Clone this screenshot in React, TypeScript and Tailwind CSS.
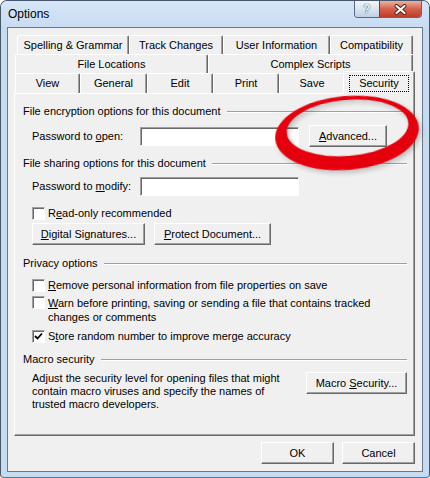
import React from "react";

// classic 3D edge colours
const raised =
  "border border-t-white border-l-white border-r-[#696969] border-b-[#696969] shadow-[inset_-1px_-1px_0_#a0a0a0] bg-[#f0f0f0]";
const sunken =
  "border border-t-[#a0a0a0] border-l-[#a0a0a0] border-r-white border-b-white shadow-[inset_1px_1px_0_#696969] bg-white";

const Tab = ({ label, className = "" }: { label: string; className?: string }) => (
  <div
    className={`flex h-full items-center justify-center rounded-t-[2px] border-l border-t border-r border-l-white border-t-white border-r-[#696969] shadow-[inset_-1px_0_0_#a0a0a0] ${className}`}
  >
    {label}
  </div>
);

const GroupHeader = ({ title, className = "" }: { title: string; className?: string }) => (
  <div className={`flex h-[13px] items-center pl-[8px] pr-[7px] ${className}`}>
    <span className="leading-[13px]">{title}</span>
    <div className="ml-[6px] h-[2px] flex-1 border-t border-b border-t-[#a0a0a0] border-b-white" />
  </div>
);

// label wrapped in a span so flex doesn't trim the spaces around the access key
const Button = ({ children, className = "" }: { children: React.ReactNode; className?: string }) => (
  <div className={`flex h-[22px] items-center justify-center ${raised} ${className}`}>
    <span>{children}</span>
  </div>
);

const CheckBox = ({ checked, children, className = "" }: { checked?: boolean; children: React.ReactNode; className?: string }) => (
  <div className={`flex items-start pl-[17px] ${className}`}>
    <div className={`flex h-[13px] w-[13px] shrink-0 items-center justify-center ${sunken}`}>
      {checked && (
        <svg width="9" height="9" viewBox="0 0 9 9">
          <path d="M1 4 L3.5 6.5 L8 1.5" fill="none" stroke="#000" strokeWidth="1.8" />
        </svg>
      )}
    </div>
    <div className="ml-[3px]">{children}</div>
  </div>
);

const Key = ({ children }: { children: React.ReactNode }) => <span className="underline">{children}</span>;

const ring =
  "M 275 133 a 72 37 0 1 0 144 0 a 72 37 0 1 0 -144 0 Z M 287 128 a 61 28 0 1 0 122 0 a 61 28 0 1 0 -122 0 Z";

export default function App() {
  return (
    <div className="relative flex h-[478px] w-[430px] flex-col overflow-hidden rounded-t-[7px] rounded-b-[4px] border border-[#46576b] border-b-[#2f82c8] bg-[#c6daf0] font-['Liberation_Sans',Arial,sans-serif] text-[11px] leading-[13px] text-black">
      {/* title bar */}
      <div className="flex h-[26px] shrink-0 justify-between bg-linear-to-b from-[#d6e6f8] to-[#c9dcf2] pl-[7px] pr-[7px]">
        <div className="flex items-center text-[12px]">Options</div>
        <div className="flex h-[17px] self-start overflow-hidden rounded-b-[4px] border border-t-0 border-[#586a80]">
          <div className="flex w-[24px] items-center justify-center bg-linear-to-b from-[#f0f5fa] via-[#dbe5f1] to-[#bfd0e4] text-[12px] font-bold text-[#f7f9fc] [text-shadow:0_0_1px_#3a4b60,0_0_1px_#3a4b60]">
            ?
          </div>
          <div className="flex w-[42px] items-center justify-center border-l border-[#7a3a30] bg-linear-to-b from-[#eab1a4] via-[#d3604b] to-[#c03a26]">
            <svg width="13" height="11" viewBox="0 0 13 11">
              <path d="M2.5 2 L10.5 9 M10.5 2 L2.5 9" stroke="#5a1c14" strokeWidth="4" strokeLinecap="round" />
              <path d="M2.5 2 L10.5 9 M10.5 2 L2.5 9" stroke="#fff" strokeWidth="2.2" strokeLinecap="round" />
            </svg>
          </div>
        </div>
      </div>

      {/* client area */}
      <div className="mx-[6px] flex h-[445px] shrink-0 flex-col border border-[#67798d] bg-[#f0f0f0] pl-[6px] pt-[7px]">
        <div className="flex w-[401px] flex-col">
          <div className="flex h-[19px] pl-[3px]">
            <Tab label="Spelling & Grammar" className="w-[112px]" />
            <Tab label="Track Changes" className="w-[94px]" />
            <Tab label="User Information" className="w-[107px]" />
            <Tab label="Compatibility" className="w-[83px]" />
          </div>
          <div className="flex h-[19px] pl-[1px]">
            <Tab label="File Locations" className="w-[193px]" />
            <Tab label="Complex Scripts" className="w-[205px]" />
          </div>
          <div className="flex h-[20px] items-end pl-[1px]">
            <Tab label="View" className="w-[65px]" />
            <Tab label="General" className="w-[67px]" />
            <Tab label="Edit" className="w-[66px]" />
            <Tab label="Print" className="w-[66px]" />
            <Tab label="Save" className="w-[66px]" />
            <div className="relative z-10 -mb-px -ml-[2px] flex h-[23px] w-[72px] items-start justify-center rounded-t-[2px] border-l border-t border-r border-l-white border-t-white border-r-[#696969] bg-[#f0f0f0] pt-[3px] shadow-[inset_-1px_0_0_#a0a0a0]">
              <span className="border border-dotted border-black px-[9px] py-px">Security</span>
            </div>
          </div>

          {/* tab page */}
          <div className="flex h-[343px] flex-col border border-t-white border-l-white border-r-[#696969] border-b-[#696969] shadow-[inset_-1px_-1px_0_#a0a0a0]">
            <GroupHeader title="File encryption options for this document" className="mt-[11px]" />
            <div className="mt-[7px] flex h-[22px] items-center pl-[17px]">
              <div className="w-[108px]">
                Password to <Key>o</Key>pen:
              </div>
              <div className={`h-[19px] w-[159px] ${sunken}`} />
              <Button className="ml-[10px] w-[78px]">
                <Key>A</Key>dvanced...
              </Button>
            </div>

            <GroupHeader title="File sharing options for this document" className="mt-[10px]" />
            <div className="mt-[7px] flex h-[19px] items-center pl-[17px]">
              <div className="w-[108px]">
                Password to <Key>m</Key>odify:
              </div>
              <div className={`h-[19px] w-[159px] ${sunken}`} />
            </div>
            <CheckBox className="mt-[11px]">
              R<Key>e</Key>ad-only recommended
            </CheckBox>
            <div className="mt-[3px] flex gap-[9px] pl-[17px]">
              <Button className="w-[113px]">
                <Key>D</Key>igital Signatures...
              </Button>
              <Button className="w-[117px]">
                <Key>P</Key>rotect Document...
              </Button>
            </div>

            <GroupHeader title="Privacy options" className="mt-[12px]" />
            <CheckBox className="mt-[9px]">
              <Key>R</Key>emove personal information from file properties on save
            </CheckBox>
            <CheckBox className="mt-[4px]">
              <div className="leading-[14px]">
                <Key>W</Key>arn before printing, saving or sending a file that contains tracked
                <br />
                changes or comments
              </div>
            </CheckBox>
            <CheckBox checked className="mt-[6px]">
              S<Key>t</Key>ore random number to improve merge accuracy
            </CheckBox>

            <GroupHeader title="Macro security" className="mt-[10px]" />
            <div className="mt-[6px] flex items-start pl-[17px]">
              <div className="w-[274px] leading-[13px]">
                Adjust the security level for opening files that might
                <br />
                contain macro viruses and specify the names of
                <br />
                trusted macro developers.
              </div>
              <Button className="w-[101px]">
                Macro <Key>S</Key>ecurity...
              </Button>
            </div>
          </div>

          <div className="mt-[6px] flex justify-end gap-[8px]">
            <Button className="w-[73px]">OK</Button>
            <Button className="w-[73px]">Cancel</Button>
          </div>
        </div>
      </div>

      {/* red marker ring drawn over the dialog */}
      <svg className="pointer-events-none absolute -left-px -top-px" width={430} height={478} viewBox="0 0 430 478">
        <defs>
          <filter id="soft" x="-10%" y="-10%" width="120%" height="120%">
            <feGaussianBlur stdDeviation="0.7" />
          </filter>
          <filter id="shade" x="-20%" y="-20%" width="140%" height="140%">
            <feGaussianBlur stdDeviation="2.5" />
          </filter>
        </defs>
        <g transform="rotate(-5 347 133)">
          <path d={ring} fill="#000" opacity="0.2" filter="url(#shade)" transform="translate(2 3)" fillRule="evenodd" />
          <path d={ring} fill="#e6000f" filter="url(#soft)" fillRule="evenodd" />
        </g>
      </svg>
    </div>
  );
}
